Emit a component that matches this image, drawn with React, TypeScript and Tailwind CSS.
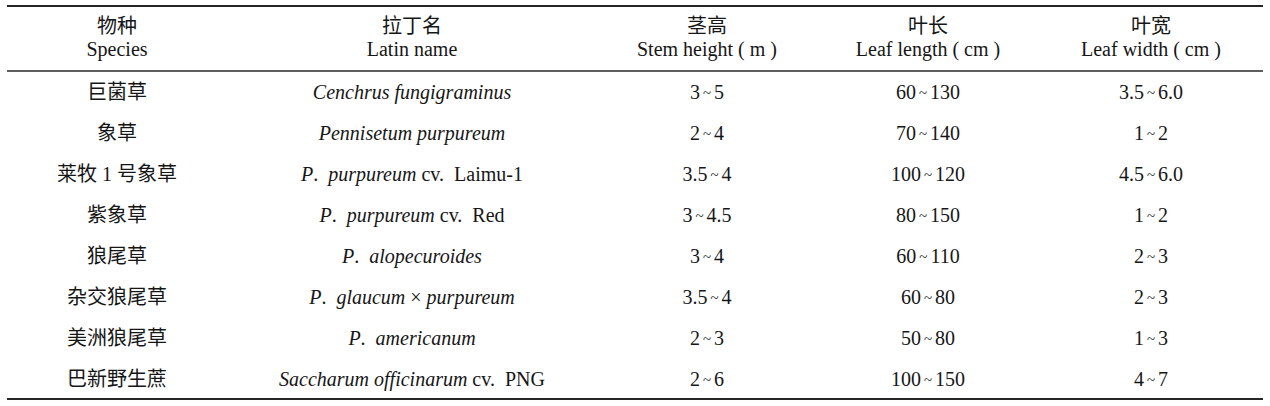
import React from "react";

type Row = {
  zh: string;
  latin: React.ReactNode;
  stem: [string, string];
  len: [string, string];
  wid: [string, string];
};

const I = ({ children }: { children: React.ReactNode }) => <i className="italic">{children}</i>;
const EN = "\u2002";

const rows: Row[] = [
  { zh: "巨菌草", latin: <I>Cenchrus fungigraminus</I>, stem: ["3", "5"], len: ["60", "130"], wid: ["3.5", "6.0"] },
  { zh: "象草", latin: <I>Pennisetum purpureum</I>, stem: ["2", "4"], len: ["70", "140"], wid: ["1", "2"] },
  {
    zh: "莱牧 1 号象草",
    latin: (
      <>
        <I>P</I>.{EN}
        <I>purpureum</I> cv.{EN}Laimu-1
      </>
    ),
    stem: ["3.5", "4"],
    len: ["100", "120"],
    wid: ["4.5", "6.0"],
  },
  {
    zh: "紫象草",
    latin: (
      <>
        <I>P</I>.{EN}
        <I>purpureum</I> cv.{EN}Red
      </>
    ),
    stem: ["3", "4.5"],
    len: ["80", "150"],
    wid: ["1", "2"],
  },
  {
    zh: "狼尾草",
    latin: (
      <>
        <I>P</I>.{EN}
        <I>alopecuroides</I>
      </>
    ),
    stem: ["3", "4"],
    len: ["60", "110"],
    wid: ["2", "3"],
  },
  {
    zh: "杂交狼尾草",
    latin: (
      <>
        <I>P</I>.{EN}
        <I>glaucum</I> × <I>purpureum</I>
      </>
    ),
    stem: ["3.5", "4"],
    len: ["60", "80"],
    wid: ["2", "3"],
  },
  {
    zh: "美洲狼尾草",
    latin: (
      <>
        <I>P</I>.{EN}
        <I>americanum</I>
      </>
    ),
    stem: ["2", "3"],
    len: ["50", "80"],
    wid: ["1", "3"],
  },
  {
    zh: "巴新野生蔗",
    latin: (
      <>
        <I>Saccharum officinarum</I> cv.{EN}PNG
      </>
    ),
    stem: ["2", "6"],
    len: ["100", "150"],
    wid: ["4", "7"],
  },
];

const Range = ({ v }: { v: [string, string] }) => (
  <span>
    {v[0]}
    <span className="inline-block px-[3px] text-[15px] align-[1.5px] leading-none">~</span>
    {v[1]}
  </span>
);

const grid = "grid grid-cols-[220px_370px_220px_222px_224px]";

export default function App() {
  return (
    <div
      className="w-[1270px] h-[406px] bg-white px-[7px] pt-[5px] text-[#161616] text-[20px]"
      style={{ fontFamily: '"Liberation Serif", "Noto Sans CJK SC", serif' }}
    >
      <div className="w-[1256px] h-[2px] bg-[#262626]" />
      <div className={`${grid} h-[63px] pt-[8px] leading-[23px] text-center`}>
        <div>
          <div>物种</div>
          <div>Species</div>
        </div>
        <div>
          <div>拉丁名</div>
          <div>Latin name</div>
        </div>
        <div>
          <div>茎高</div>
          <div>Stem height ( m )</div>
        </div>
        <div>
          <div>叶长</div>
          <div>Leaf length ( cm )</div>
        </div>
        <div>
          <div>叶宽</div>
          <div>Leaf width ( cm )</div>
        </div>
      </div>
      <div className="w-[1256px] h-[2px] bg-[#5e5e5e]" />
      <div>
        {rows.map((r, i) => (
          <div
            key={i}
            className={`${grid} ${i === rows.length - 1 ? "h-[39px]" : "h-[41px]"} leading-[41px] text-center`}
          >
            <div>{r.zh}</div>
            <div>{r.latin}</div>
            <div>
              <Range v={r.stem} />
            </div>
            <div>
              <Range v={r.len} />
            </div>
            <div>
              <Range v={r.wid} />
            </div>
          </div>
        ))}
      </div>
      <div className="w-[1256px] h-[2px] bg-[#262626]" />
    </div>
  );
}
